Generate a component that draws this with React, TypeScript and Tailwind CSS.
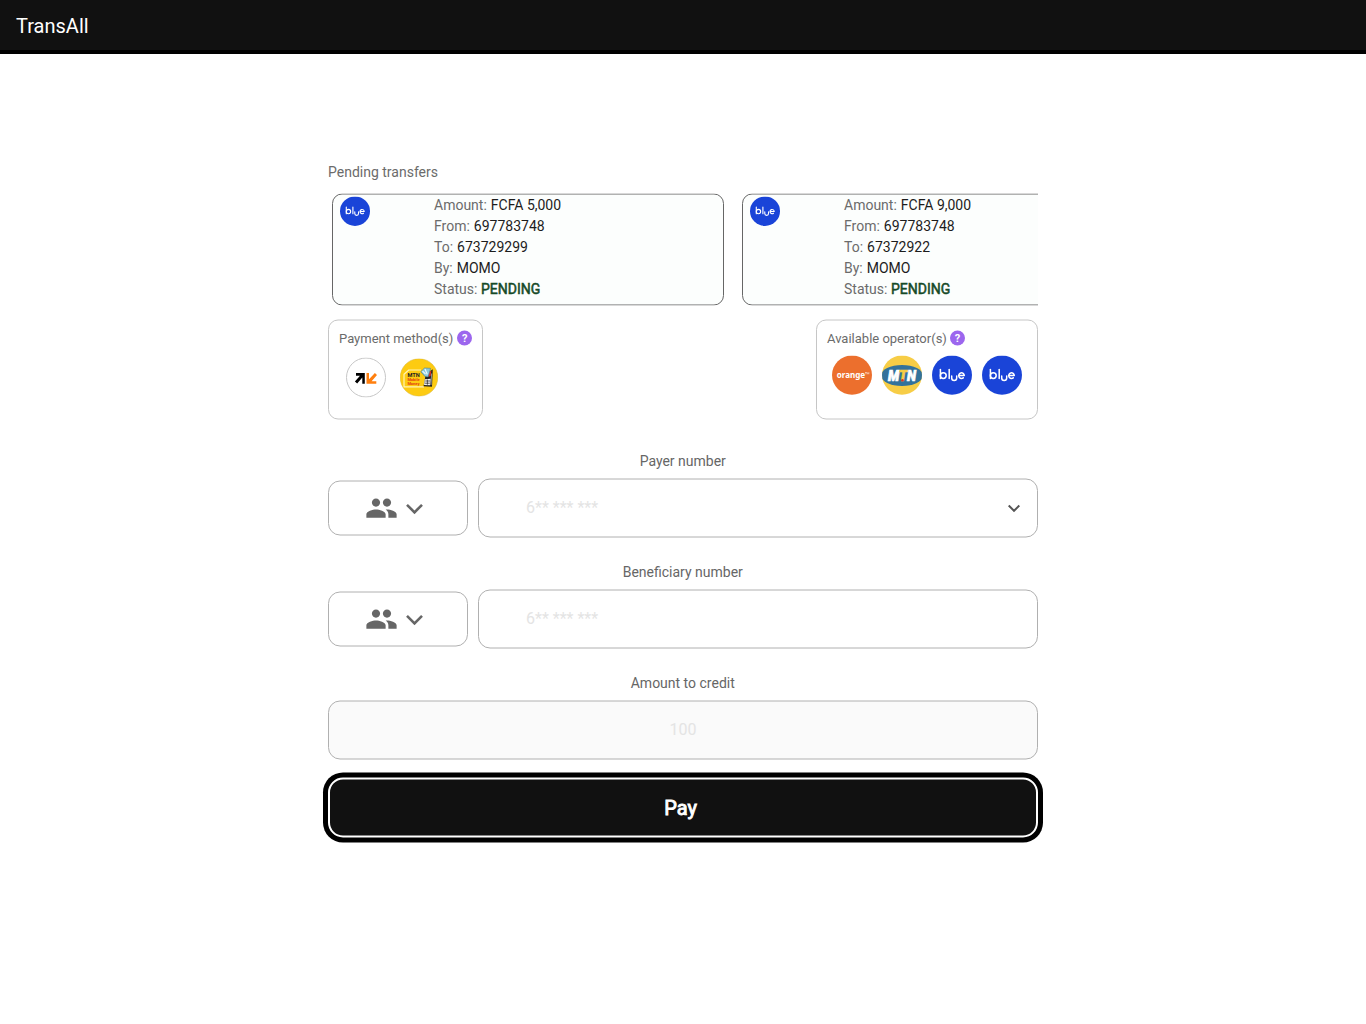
import type { ReactNode } from "react";

function BlueLogo({ size }: { size: number }) {
  return (
    <svg width={size} height={size} viewBox="0 0 40 40" className="block shrink-0">
      <ellipse cx="20" cy="19.6" rx="20" ry="19.6" fill="#1a44d8" />
      <g fill="none" stroke="#fff" strokeWidth="1.5" strokeLinecap="round" strokeLinejoin="round">
        <path d="M8.400 14V23" />
        <circle cx="11.300" cy="20.100" r="2.900" />
        <path d="M17.200 14V23" />
        <path d="M19.700 20.400V22.600a2.500 2.500 0 0 0 5 0V20.400" />
        <path d="M27 20H32.300A2.800 2.800 0 1 0 31.300 22.300" />
      </g>
    </svg>
  );
}

function OrangeLogo() {
  return (
    <svg width="40" height="40" viewBox="0 0 40 40" className="block shrink-0">
      <ellipse cx="20" cy="19.6" rx="20" ry="19.6" fill="#ec6f2d" />
      <text x="4.7" y="22.900" textLength="28.5" lengthAdjust="spacingAndGlyphs" fill="#fff" fontFamily="Noto Sans, sans-serif" fontWeight="700" fontSize="8.500">
        orange
      </text>
      <path d="M33 17H34.800M33.900 17V18.800M35.200 18.800V17L36 18 36.800 17V18.800" fill="none" stroke="#fff" strokeWidth=".5" />
    </svg>
  );
}

function MtnLogo() {
  return (
    <svg width="40" height="40" viewBox="0 0 40 40" className="block shrink-0">
      <clipPath id="mtn-round">
        <ellipse cx="20" cy="19.6" rx="20" ry="19.6" />
      </clipPath>
      <g clipPath="url(#mtn-round)">
        <rect width="40" height="40" fill="#f7cd46" />
        <ellipse cx="20" cy="20" rx="21" ry="10.6" fill="#33729b" />
      </g>
      <text x="6" y="25.400" textLength="28" lengthAdjust="spacingAndGlyphs" fill="#fff" stroke="#fff" strokeWidth=".7" fontFamily="Roboto, sans-serif" fontWeight="900" fontStyle="italic" fontSize="14">
        M<tspan fill="#f7cd46" stroke="#f7cd46">T</tspan>N
      </text>
      <circle cx="20.4" cy="24.7" r="1.3" fill="#d9352c" />
    </svg>
  );
}

function OrangeMoneyLogo() {
  return (
    <svg width="40" height="40" viewBox="0 0 40 40" className="block shrink-0">
      <circle cx="20" cy="20" r="19.5" fill="#fff" stroke="#c6c6c6" />
      <path d="M10 15.600H18.8V26.300H16.300V20L11.200 26 8.900 23.900 14 18.200H10Z" fill="#000" />
      <path d="M30.300 26.300H20.500V15.600H23V21.700L28.900 15.400 31 17.600 25.600 23.700H30.300Z" fill="#ff7f0e" />
    </svg>
  );
}

function MomoLogo() {
  return (
    <svg width="38" height="38" viewBox="0 0 38 38" className="mt-[0.5px] block shrink-0">
      <circle cx="19" cy="19" r="18.8" fill="#fdcb12" stroke="#d4b43e" strokeWidth=".5" />
      <path d="M24 28.300H4V15.700L8.800 11.500H21" fill="none" stroke="#fff4b5" strokeWidth="1.2" strokeLinejoin="round" />
      <g fontFamily="Roboto, sans-serif" fontWeight="700">
        <text x="7.4" y="18" fontSize="5.5" fill="#222" textLength="12.3" lengthAdjust="spacingAndGlyphs">MTN</text>
        <text x="7.4" y="22.200" fontSize="4" fill="#e23b12" textLength="12.2" lengthAdjust="spacingAndGlyphs">Mobile</text>
        <text x="7.4" y="26.400" fontSize="4" fill="#e23b12" textLength="12" lengthAdjust="spacingAndGlyphs">Money</text>
      </g>
      <path d="M25.800 15.500 32.800 10.800 32 28.300 23.500 27.800Z" fill="#222" />
      <path d="M28.300 13 31.300 12.500 30.600 17.500 28.300 18.500Z" fill="#e62b20" />
      <path d="M20.800 13.200 24.500 9.500 30.500 9.800 29.500 14 28 18.500 25 18Z" fill="#8cc9dc" stroke="#3a7186" strokeWidth=".5" />
      <path d="M22.500 12.600 25.500 15.500M25 10.500 27.300 16" stroke="#eefafc" strokeWidth="1.2" />
      <path d="M24.700 20.800 30.700 20.300 30.100 26.700 24.100 26.500Z" fill="#eee" />
      <path d="M25.200 22.500H30M24.900 24.700H29.800M27.400 21V26.200" stroke="#222" strokeWidth=".7" />
      <path d="M31.600 15 31 26.500" stroke="#ddd" strokeWidth=".6" />
    </svg>
  );
}

function HelpIcon() {
  return (
    <span className="relative -top-[0.5px] flex size-[15px] items-center justify-center rounded-full bg-[#9c66ee] text-[11px] leading-none font-bold text-white">
      ?
    </span>
  );
}

function Row({ label, children }: { label: string; children: ReactNode }) {
  return (
    <div className="text-[#6b6b6b]">
      {label}:<span className="ml-[4px] text-[#1c1c1c]">{children}</span>
    </div>
  );
}

function TransferCard({ amount, to }: { amount: string; to: string }) {
  return (
    <div className="flex h-[112px] w-[392px] shrink-0 rounded-[10px] border border-[#666] bg-[#fcfefd]">
      <div className="w-[101px] pt-[2px] pl-[7px]">
        <BlueLogo size={30} />
      </div>
      <div className="text-[14px] leading-[21px]">
        <Row label="Amount">FCFA {amount}</Row>
        <Row label="From">697783748</Row>
        <Row label="To">{to}</Row>
        <Row label="By">MOMO</Row>
        <Row label="Status">
          <span className="-ml-[0.5px] text-[#154a28] [-webkit-text-stroke:0.5px_#154a28]">PENDING</span>
        </Row>
      </div>
    </div>
  );
}

function CountryPicker() {
  return (
    <div className="flex h-[55px] w-[140px] items-center rounded-[12px] border border-[#b0b0b0] pl-[36px] text-[#666]">
      <svg width="33" height="33" viewBox="0 0 24 24" fill="currentColor">
        <path d="M16 11c1.66 0 2.99-1.34 2.99-3S17.66 5 16 5s-3 1.34-3 3 1.34 3 3 3zm-8 0c1.66 0 2.99-1.34 2.99-3S9.66 5 8 5 5 6.34 5 8s1.34 3 3 3zm0 2c-2.33 0-7 1.17-7 3.500V19h14v-2.500c0-2.330-4.670-3.500-7-3.500zm8 0c-.29 0-.62.020-.97.050 1.160.840 1.970 1.970 1.970 3.450V19h6v-2.500c0-2.330-4.670-3.500-7-3.500z" />
      </svg>
      <svg width="17" height="11" viewBox="0 0 17 11" className="mt-px ml-[8px]" fill="none" stroke="currentColor" strokeWidth="2.6">
        <path d="M1 1.300 8.500 8.800 16 1.300" />
      </svg>
    </div>
  );
}

function FieldLabel({ children }: { children: ReactNode }) {
  return <div className="h-[29px] pt-[0.5px] pr-[0.5px] text-center text-[14px] leading-[21px] text-[#666]">{children}</div>;
}

function NumberField({ label, arrow }: { label: string; arrow?: boolean }) {
  return (
    <div className="h-[111px]">
      <FieldLabel>{label}</FieldLabel>
      <div className="flex items-center gap-[10px]">
        <CountryPicker />
        <div className="flex h-[59px] w-[560px] items-center justify-between rounded-[12px] border border-[#b0b0b0] pr-[17px] pl-[47px]">
          <span className="mb-[2px] text-[16px] text-[#e4e4e4]">6** *** ***</span>
          {arrow && (
            <svg width="12" height="8" viewBox="0 0 12 8" fill="none" stroke="#555" strokeWidth="2">
              <path d="M.7 1 6 6.300 11.300 1" />
            </svg>
          )}
        </div>
      </div>
    </div>
  );
}

export default function App() {
  return (
    <div className='h-[1024px] overflow-hidden bg-white font-["Roboto","Liberation_Sans",sans-serif]'>
      <header className="flex h-[54px] items-center border-b-4 border-black bg-[#111] pl-4 text-[20px] text-white">
        <span className="relative top-px">TransAll</span>
      </header>
      <main className="mx-auto w-[710px] translate-y-[0.5px] pt-[107px]">
        <h2 className="h-[32px] text-[14px] leading-[21px] text-[#6b6b6b]">Pending transfers</h2>
        <div className="flex gap-[18px] overflow-hidden pl-1">
          <TransferCard amount="5,000" to="673729299" />
          <TransferCard amount="9,000" to="67372922" />
        </div>
        <div className="mt-[14px] flex justify-between">
          <section className="h-[100px] w-[155px] rounded-[10px] border border-[#c6c6c6] pt-[8px]">
            <div className="flex items-center gap-1 pl-[10px] text-[13px] leading-[20px] text-[#6b6b6b]">
              Payment method(s) <HelpIcon />
            </div>
            <div className="flex items-start gap-[14px] pt-[9px] pl-[17px]">
              <OrangeMoneyLogo />
              <MomoLogo />
            </div>
          </section>
          <section className="h-[100px] w-[222px] rounded-[10px] border border-[#c6c6c6] pt-[8px]">
            <div className="flex items-center gap-[3px] pl-[10px] text-[13px] leading-[20px] text-[#6b6b6b]">
              Available operator(s) <HelpIcon />
            </div>
            <div className="flex gap-[10px] pt-[7px] pl-[15px]">
              <OrangeLogo />
              <MtnLogo />
              <BlueLogo size={40} />
              <BlueLogo size={40} />
            </div>
          </section>
        </div>
        <div className="mt-[30px]">
          <NumberField label="Payer number" arrow />
          <NumberField label="Beneficiary number" />
          <FieldLabel>Amount to credit</FieldLabel>
          <div className="flex h-[59px] items-center justify-center rounded-[12px] border border-[#b0b0b0] bg-[#fafafa] pb-[2px] text-[16px] text-[#e4e4e4]">
            100
          </div>
        </div>
        <button className="mt-[18px] flex h-[60px] w-full items-center justify-center rounded-[15px] border-2 border-white bg-[#111] pr-[5px] text-[20px] text-white shadow-[0_0_0_5px_#000] [-webkit-text-stroke:0.9px_#fff]">
          Pay
        </button>
      </main>
    </div>
  );
}
